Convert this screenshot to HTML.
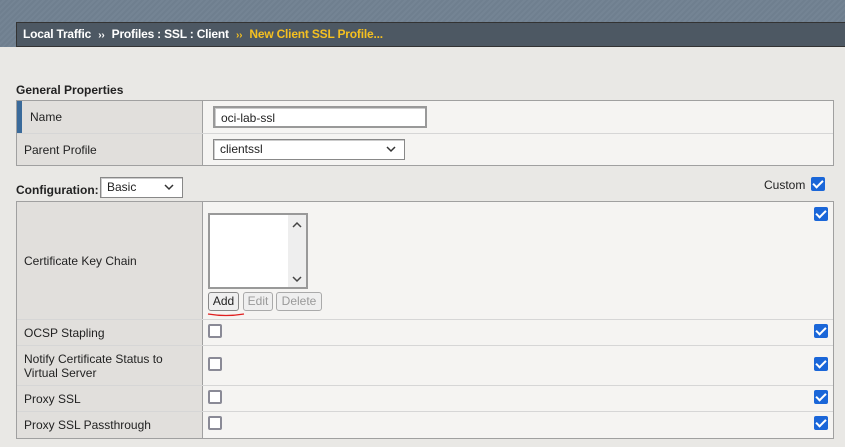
<!DOCTYPE html><html><head><style>
*{box-sizing:border-box}body{margin:0;width:845px;height:447px;overflow:hidden;background:#e9e8e5;font-family:"Liberation Sans",sans-serif;font-size:12px;color:#222;position:relative}
.top{position:absolute;left:0;top:0;width:845px;height:47px;background:repeating-linear-gradient(135deg,#6f7f8f 0 2px,#748494 2px 4px)}
.bc{position:absolute;left:16px;top:22px;width:830px;height:25px;background:#4d5863;border:1px solid #333;border-right:none;color:#fff;font-weight:bold;font-size:12px;line-height:23px;padding-left:6px;letter-spacing:-.2px}
.bc .y{color:#f5c020}.bc .s{font-size:10px;margin:0 4px}
.a{position:absolute}
.t{position:absolute;left:16px;width:818px;border:1px solid #a0a0a0;background:#f5f4f2}
.r{position:absolute;left:0;width:816px;border-top:1px solid #d6d6d6}
.l{position:absolute;left:0;top:0;bottom:0;width:186px;background:#e1dfdc;border-right:1px solid #a0a0a0;padding-left:7px;display:flex;align-items:center}
.cb{position:absolute;width:14px;height:14px;border:2px solid #8a8a96;border-radius:2px;background:#fff}
.ck{position:absolute;width:14px;height:14px;background:#1a66d8;border-radius:2px}
.ck:after{content:"";position:absolute;left:4px;top:1px;width:4px;height:8px;border:solid #fff;border-width:0 2px 2px 0;transform:rotate(45deg)}
.in{position:absolute;background:#fff;border:1px solid #999;box-shadow:inset 1px 1px 0 #ccc;padding-left:6px;font-size:12px}
.btn{position:absolute;top:292px;height:19px;border:1px solid #aaa;border-radius:3px;background:#efefef;font-size:12px;line-height:17px;text-align:center;color:#999}
svg{position:absolute}
</style></head><body>
<div class="top"></div>
<div class="bc">Local Traffic <span class="s">››</span> Profiles : SSL : Client <span class="s y">››</span> <span class="y">New Client SSL Profile...</span></div>
<div class="a" style="left:16px;top:83px;font-weight:bold">General Properties</div>
<div class="t" style="top:100px;height:66px">
 <div class="r" style="top:0;height:32px;border-top:none"><div class="l" style="border-left:5px solid #3a6a9a;padding-left:8px">Name</div></div>
 <div class="r" style="top:32px;height:32px"><div class="l">Parent Profile</div></div>
</div>
<div class="in" style="left:213px;top:106px;width:214px;height:22px;line-height:20px;border:2px solid #999">oci-lab-ssl</div>
<div class="in" style="left:213px;top:139px;width:192px;height:21px;line-height:19px;border:1px solid #888">clientssl<svg style="right:8px;top:6px" width="10" height="7"><path d="M1 1L5 5L9 1" fill="none" stroke="#333" stroke-width="1.5"/></svg></div>
<div class="a" style="left:16px;top:183px;font-weight:bold">Configuration:</div>
<div class="in" style="left:100px;top:177px;width:83px;height:21px;line-height:19px;border:1px solid #888">Basic<svg style="right:8px;top:6px" width="10" height="7"><path d="M1 1L5 5L9 1" fill="none" stroke="#333" stroke-width="1.5"/></svg></div>
<div class="a" style="left:764px;top:178px">Custom</div><div class="ck" style="left:811px;top:177px"></div>
<div class="t" style="top:201px;height:238px">
 <div class="r" style="top:0;height:117px;border-top:none"><div class="l">Certificate Key Chain</div></div>
 <div class="r" style="top:117px;height:26px"><div class="l">OCSP Stapling</div></div>
 <div class="r" style="top:143px;height:40px"><div class="l">Notify Certificate Status to<br>Virtual Server</div></div>
 <div class="r" style="top:183px;height:26px"><div class="l">Proxy SSL</div></div>
 <div class="r" style="top:209px;height:27px"><div class="l">Proxy SSL Passthrough</div></div>
</div>
<div class="a" style="left:208px;top:213px;width:100px;height:76px;background:#fff;border:2px solid #999"><div style="position:absolute;right:0;top:0;width:18px;height:72px;background:#eee"><svg style="left:4px;top:6px" width="10" height="7"><path d="M1 6L5 2L9 6" fill="none" stroke="#444" stroke-width="1.5"/></svg><svg style="left:4px;top:61px" width="10" height="7"><path d="M1 1L5 5L9 1" fill="none" stroke="#444" stroke-width="1.5"/></svg></div></div>
<div class="btn" style="left:208px;width:31px;color:#222;border-color:#888">Add</div>
<div class="btn" style="left:243px;width:30px">Edit</div>
<div class="btn" style="left:276px;width:46px">Delete</div>
<svg style="left:206px;top:312px" width="40" height="6"><path d="M2 2Q20 5 38 2" fill="none" stroke="#e02020" stroke-width="1.3"/></svg>
<div class="cb" style="left:208px;top:324px"></div><div class="cb" style="left:208px;top:357px"></div><div class="cb" style="left:208px;top:390px"></div><div class="cb" style="left:208px;top:416px"></div>
<div class="ck" style="left:814px;top:207px"></div><div class="ck" style="left:814px;top:324px"></div><div class="ck" style="left:814px;top:357px"></div><div class="ck" style="left:814px;top:390px"></div><div class="ck" style="left:814px;top:416px"></div>
</body></html>
